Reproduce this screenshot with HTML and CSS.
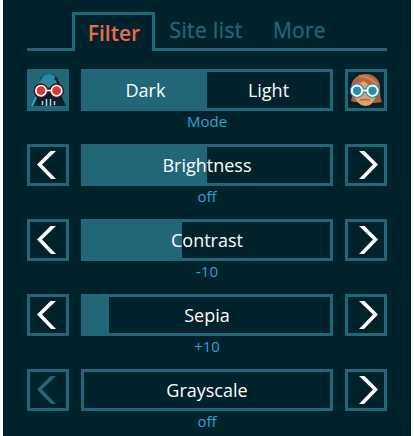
FILE: index.html
```html
<!DOCTYPE html>
<html lang="en">
<head>
<meta charset="utf-8">
<title>Filter</title>
<link rel="stylesheet" href="styles.css">
</head>
<body>
<svg class="defs" width="0" height="0">
  <symbol id="prev" viewBox="0 0 36 36"><path d="M20.500 4H26L12 17.500 26 32h-5L7 17.500z" fill="currentColor"/></symbol>
  <symbol id="next" viewBox="0 0 36 36"><path d="M11 4h5.500L30 17.500 16 32h-5l14-14.500z" fill="currentColor"/></symbol>
</svg>
<main class="panel">
  <nav class="tabs">
    <span class="tab active">Filter</span>
    <span class="tab site">Site list</span>
    <span class="tab more">More</span>
  </nav>
  <section class="row">
    <button class="btn filled">
      <svg viewBox="0 0 36 36">
        <path d="M1 34 6 22 9 11C11 4 14 2 19 2s9 3 10 9l2 12 5 11z" fill="#0a222c"/>
        <path d="M1 34 5 24l2 2-4 8z" fill="#3f9fb8"/>
        <path d="M5 18 11 7l-1 10z" fill="#2c8eaa"/>
        <path d="M10 16C10 6 13 2 19 2s9 5 9 14l-6 2h-6z" fill="#2b87a3"/>
        <path d="M25 6q4 4 4 10" fill="none" stroke="#0a222c" stroke-width="2"/>
        <path d="M15 17h8" stroke="#4b1519" stroke-width="3"/>
        <circle cx="11" cy="18.700" r="7.400" fill="#4b1519"/>
        <circle cx="26.600" cy="18.700" r="7.400" fill="#4b1519"/>
        <path d="M15 18.500h8" stroke="#fff" stroke-width="1.600"/>
        <g fill="#d23c37" stroke="#fff" stroke-width="1.700"><circle cx="11" cy="18.700" r="5.200"/><circle cx="26.600" cy="18.700" r="5.200"/></g>
        <path d="M12.500 33v-4M16.500 34v-7M20.500 34v-7M24.500 33v-4" stroke="#a4dce8" stroke-width="1.500"/>
      </svg>
    </button>
    <div class="bar toggle"><span class="choice on">Dark</span><span class="choice">Light</span></div>
    <button class="btn">
      <svg viewBox="0 0 36 36">
        <path d="M4 24Q3 6 13 3l4-1q7 0 11 4 5 4 4 12 0 8 2 12l-7 1-21-1-3-1z" fill="#a8623d"/>
        <path d="M5 15 14 8l14 5v11q-3 10-11 10-9-1-12-13z" fill="#dda071"/>
        <path d="M3 14Q5 6 10 4q4-2 9-2 8 1 11 7l1 6Q21 15 16 9 10 13 3 14z" fill="#b6653e"/>
        <path d="M11 4q11 0 18 9" fill="none" stroke="#d08358" stroke-width="2.500"/>
        <path d="M12 28q5-1 10 0" fill="none" stroke="#a66b49" stroke-width="1.400"/>
        <path d="M13 18.500h10" stroke="#1c8099" stroke-width="4"/>
        <g fill="#218aa5"><circle cx="9" cy="18.700" r="7.200"/><circle cx="24.500" cy="18.700" r="7.200"/></g>
        <path d="M13 18.500h8" stroke="#fff" stroke-width="1.800"/>
        <g fill="#278fae" stroke="#fff" stroke-width="2"><circle cx="9" cy="18.700" r="5.200"/><circle cx="24.500" cy="18.700" r="5.200"/></g>
      </svg>
    </button>
    <p class="status">Mode</p>
  </section>
  <section class="row">
    <button class="btn"><svg><use href="#prev"/></svg></button>
    <div class="bar half">Brightness</div>
    <button class="btn"><svg><use href="#next"/></svg></button>
    <p class="status">off</p>
  </section>
  <section class="row">
    <button class="btn"><svg><use href="#prev"/></svg></button>
    <div class="bar forty">Contrast</div>
    <button class="btn"><svg><use href="#next"/></svg></button>
    <p class="status">-10</p>
  </section>
  <section class="row">
    <button class="btn"><svg><use href="#prev"/></svg></button>
    <div class="bar ten">Sepia</div>
    <button class="btn"><svg><use href="#next"/></svg></button>
    <p class="status">+10</p>
  </section>
  <section class="row">
    <button class="btn disabled"><svg><use href="#prev"/></svg></button>
    <div class="bar">Grayscale</div>
    <button class="btn"><svg><use href="#next"/></svg></button>
    <p class="status">off</p>
  </section>
</main>
</body>
</html>
```
FILE: styles.css
```css
* { box-sizing: border-box; }
html { background: #fff; overflow: hidden; }
body { margin: 0; font-family: "Open Sans", sans-serif; }
.defs { display: block; }
.panel {
  width: 408px;
  height: 436px;
  margin: 0 3px;
  padding: 12px 24px 0;
  background: #00222b;
  overflow: hidden;
}
.tabs {
  display: flex;
  height: 39px;
  width: 360px;
  margin-bottom: 18px;
  font-size: 21px;
  line-height: 37px;
  color: #216778;
}
.tabs::before { content: ""; width: 45px; border-bottom: 3px solid #216778; }
.tab {
  border-bottom: 3px solid #216778;
  white-space: nowrap;
  -webkit-text-stroke: 0.3px currentColor;
}
.tab.active {
  width: 83px;
  border: 3px solid #216778;
  border-bottom: 0;
  text-align: center;
  color: #e96c4c;
  font-weight: 600;
  padding-left: 1px;
  -webkit-text-stroke: 0;
}
.site { width: 118px; padding-left: 14.5px; letter-spacing: 0.4px; }
.more { flex: 1; letter-spacing: 0.2px; }
.row {
  display: grid;
  grid-template-columns: 42px 252px 42px;
  grid-template-rows: 42px 33px;
  column-gap: 12px;
}
.btn {
  width: 42px;
  height: 42px;
  padding: 0;
  border: 3px solid #216778;
  background: none;
  color: #fff;
}
.btn svg { display: block; width: 36px; height: 36px; }
.filled { background: #216778; }
.disabled { color: #216778; }
.bar {
  border: 3px solid #216778;
  color: #fff;
  font-size: 18px;
  line-height: 36px;
  text-align: center;
  background: linear-gradient(#216778, #216778) no-repeat 0 0 / 0 100%;
}
.half { background-size: 123px 100%; }
.forty { background-size: 98px 100%; }
.ten { background-size: 25px 100%; }
.toggle { display: flex; }
.choice { flex: 1; }
.on { background: #216778; }
.status {
  grid-column: 2;
  margin: 0;
  font-size: 15px;
  line-height: 21px;
  text-align: center;
  color: #2aa5d6;
}
```
